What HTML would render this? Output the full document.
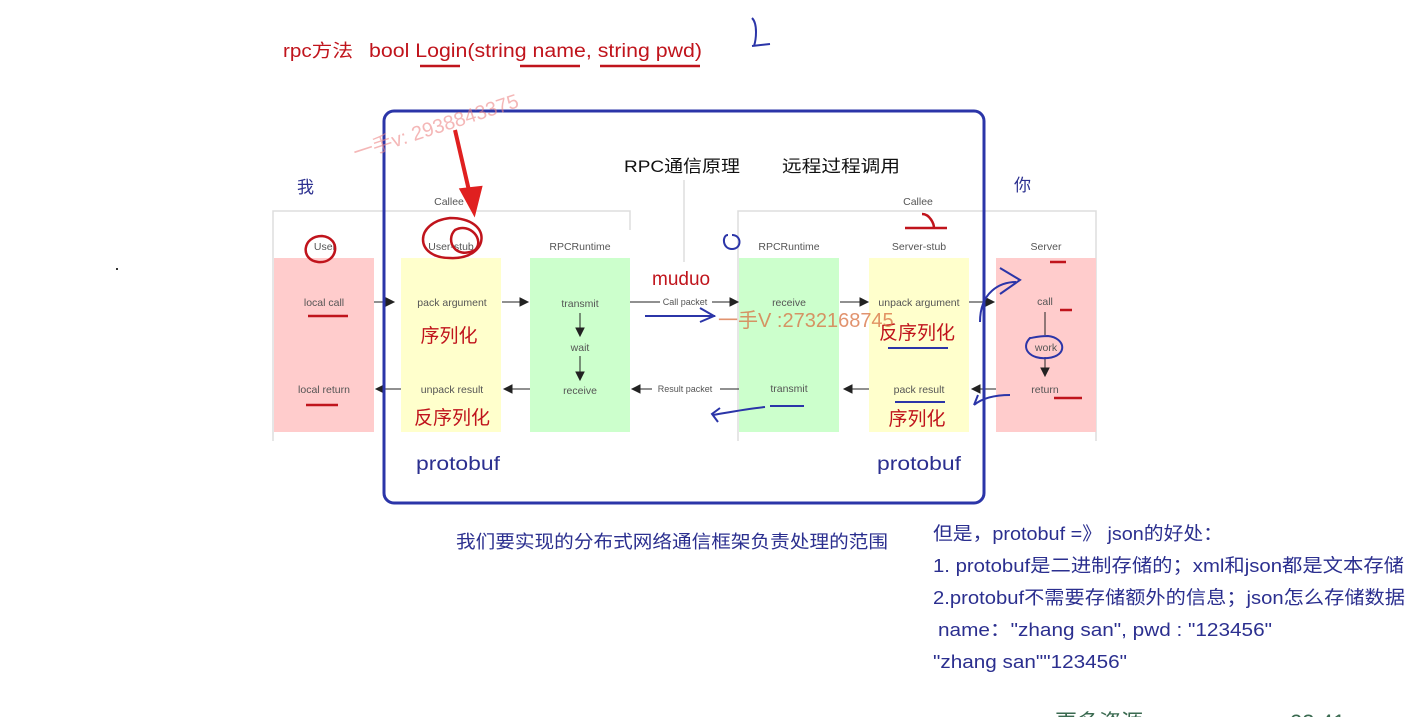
<!DOCTYPE html>
<html><head><meta charset="utf-8"><style>
html,body{margin:0;padding:0;background:#fff;width:1406px;height:717px;overflow:hidden}
svg{display:block}
text{font-family:"Liberation Sans","Noto Sans CJK SC",sans-serif}
</style></head><body>
<svg width="1406" height="717" viewBox="0 0 1406 717">
<g fill="none" stroke="#ddd" stroke-width="1.5">
<path d="M273 441V211H630V230"/><path d="M738 441V211H1096V441"/>
</g>
<line x1="684" y1="180" x2="684" y2="262" stroke="#ccc"/>
<rect x="274" y="258" width="100" height="174" fill="#ffcccc"/>
<rect x="401" y="258" width="100" height="174" fill="#ffffcc"/>
<rect x="530" y="258" width="100" height="174" fill="#ccffcc"/>
<rect x="739" y="258" width="100" height="174" fill="#ccffcc"/>
<rect x="869" y="258" width="100" height="174" fill="#ffffcc"/>
<rect x="996" y="258" width="100" height="174" fill="#ffcccc"/>
<g font-size="10.5" fill="#555" text-anchor="middle">
<text x="449" y="205">Callee</text><text x="918" y="205">Callee</text>
<text x="325" y="250">User</text><text x="451" y="250">User-stub</text><text x="580" y="250">RPCRuntime</text>
<text x="789" y="250">RPCRuntime</text><text x="919" y="250">Server-stub</text><text x="1046" y="250">Server</text>
<text x="324" y="306">local call</text><text x="324" y="393">local return</text>
<text x="452" y="306">pack argument</text><text x="452" y="393">unpack result</text>
<text x="580" y="307">transmit</text><text x="580" y="351">wait</text><text x="580" y="394">receive</text>
<text x="789" y="306">receive</text><text x="789" y="392">transmit</text>
<text x="919" y="306">unpack argument</text><text x="919" y="393">pack result</text>
<text x="1045" y="305">call</text><text x="1046" y="351">work</text><text x="1045" y="393">return</text>
<text x="685" y="305" font-size="9">Call packet</text><text x="685" y="392" font-size="9">Result packet</text>
</g>
<g stroke="#222" stroke-width="1" fill="#222">
<path d="M374 302H386" /><path d="M386 298l8 4-8 4z"/>
<path d="M502 302H520"/><path d="M520 298l8 4-8 4z"/>
<path d="M630 302H660M712 302H730"/><path d="M730 298l8 4-8 4z"/>
<path d="M840 302H860"/><path d="M860 298l8 4-8 4z"/>
<path d="M969 302H986"/><path d="M986 298l8 4-8 4z"/>
<path d="M996 389H980"/><path d="M980 385l-8 4 8 4z"/>
<path d="M869 389H852"/><path d="M852 385l-8 4 8 4z"/>
<path d="M739 389H720M652 389H640"/><path d="M640 385l-8 4 8 4z"/>
<path d="M530 389H512"/><path d="M512 385l-8 4 8 4z"/>
<path d="M401 389H384"/><path d="M384 385l-8 4 8 4z"/>
<path d="M580 313V328"/><path d="M576 328l4 8 4-8z"/>
<path d="M580 356V372"/><path d="M576 372l4 8 4-8z"/>
<path d="M1045 312V335"/><path d="M1045 357V368"/><path d="M1041 368l4 8 4-8z"/>
</g>
<rect x="384" y="111" width="600" height="392" rx="10" fill="none" stroke="#2b35a8" stroke-width="3"/>
<g fill="#c0141c" font-size="19" text-anchor="middle">
<text x="449" y="342">序列化</text><text x="452" y="424">反序列化</text>
<text x="917" y="339">反序列化</text><text x="917" y="425">序列化</text>
</g>
<text x="652" y="285" font-size="19" fill="#c0141c">muduo</text>
<text x="283" y="57" font-size="18" fill="#c0141c" textLength="70" lengthAdjust="spacingAndGlyphs">rpc方法</text>
<text x="369" y="57" font-size="19" fill="#c0141c" textLength="333" lengthAdjust="spacingAndGlyphs">bool Login(string name, string pwd)</text>
<g stroke="#c0141c" stroke-width="2.5" fill="none">
<path d="M420 66h40M520 66h60M600 66h100"/>
<path d="M308 316h40M306 405h32M1050 262h16M1060 310h12M1054 398h28M905 228h42M922 214c8 0 12 10 12 14"/>
<path d="M322 236c-20 0-22 24-4 26 20 2 24-24 4-26z"/>
<path d="M450 218c-36 4-36 40 0 40 40 2 44-40 0-40z M455 230c-10 10 0 30 20 20 10-10-5-28-20-20z"/>
</g>
<path d="M455 130L470 195M462 190l12 22 6-24z" stroke="#e02020" stroke-width="4" fill="#e02020"/>
<g stroke="#2b35a8" stroke-width="2" fill="none">
<path d="M645 316h70M700 308l14 8-14 6"/>
<path d="M728 235c-6 0-6 14 4 14 10 0 10-14 0-14"/>
<path d="M770 406h34M765 407c-20 2-40 6-52 8M720 408l-8 6 6 8"/>
<path d="M888 348h60M895 402h50"/>
<path d="M980 322c0-30 20-40 36-40M1000 268l20 12-20 14"/>
<path d="M1030 338c-10 10 0 22 18 20 20-2 18-20 0-22-10 0-16 2-18 2z"/>
<path d="M1010 395c-20 0-30 5-36 10M978 395l-4 10"/>
<path d="M752 18c6 6 4 22 2 28M752 46l18-2"/>
</g>
<text x="356" y="160" font-size="20" fill="#e88" opacity="0.6" transform="rotate(-18 356 160)">一手v: 2938843375</text>
<text x="718" y="327" font-size="20" fill="#d87040" opacity="0.75">一手V :2732168745</text>
<g font-size="17" fill="#111">
<text x="624" y="172" textLength="116" lengthAdjust="spacingAndGlyphs">RPC通信原理</text><text x="782" y="172" textLength="118" lengthAdjust="spacingAndGlyphs">远程过程调用</text>
</g>
<g fill="#2b2f8f">
<text x="297" y="193" font-size="17">我</text><text x="1014" y="191" font-size="17">你</text>
<text x="416" y="470" font-size="19" textLength="84" lengthAdjust="spacingAndGlyphs">protobuf</text><text x="877" y="470" font-size="19" textLength="84" lengthAdjust="spacingAndGlyphs">protobuf</text>
<text x="456" y="548" font-size="18" textLength="432" lengthAdjust="spacingAndGlyphs">我们要实现的分布式网络通信框架负责处理的范围</text>
<g font-size="18.5">
<text x="933" y="540" textLength="290" lengthAdjust="spacingAndGlyphs">但是，protobuf =》 json的好处：</text>
<text x="933" y="572" textLength="471" lengthAdjust="spacingAndGlyphs">1. protobuf是二进制存储的；xml和json都是文本存储</text>
<text x="933" y="604" textLength="472" lengthAdjust="spacingAndGlyphs">2.protobuf不需要存储额外的信息；json怎么存储数据</text>
<text x="938" y="636" textLength="334" lengthAdjust="spacingAndGlyphs">name："zhang san", pwd : "123456"</text>
<text x="933" y="668" textLength="194" lengthAdjust="spacingAndGlyphs">"zhang san""123456"</text>
</g></g>
<rect x="116" y="268" width="2" height="2" fill="#333"/>
<text x="1055" y="730" font-size="22" fill="#3a6a50">更多资源</text>
<text x="1290" y="730" font-size="22" fill="#3a6a50">23 41</text>
</svg>
</body></html>
